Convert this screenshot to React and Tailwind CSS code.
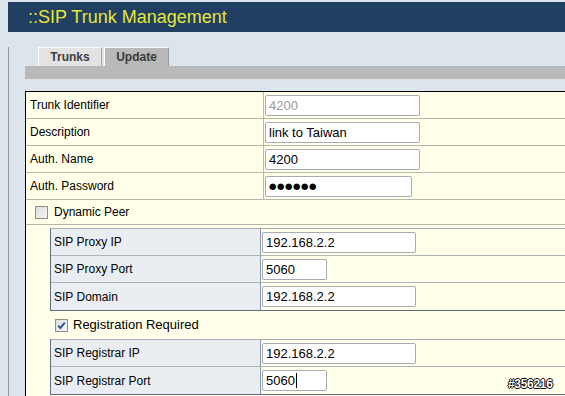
import React from "react";

// Fake text box, looks like an old XP style input
const Field = ({ value, width, muted, password, cursor }) => (
  <div
    className={`flex h-[21px] items-center rounded-[2px] border border-[#a5acb5] bg-white pl-[3px] text-[13px] leading-none ${
      muted ? "text-[#9a9a9a]" : "text-black"
    }`}
    style={{ width }}
  >
    {password ? (
      <span className="font-['DejaVu_Sans',sans-serif] text-[8.5px] tracking-[0.6px]">●●●●●●</span>
    ) : (
      <span>{value}</span>
    )}
    {cursor && <span className="ml-[1px] h-[15px] w-px bg-black" />}
  </div>
);

const CheckBox = ({ checked }) => (
  <div className="flex h-[13px] w-[13px] items-center justify-center border border-[#8e8f8f] bg-gradient-to-br from-[#dcdcdc] to-[#f6f6f6]">
    {checked && (
      <svg width="9" height="9" viewBox="0 0 9 9">
        <path d="M1.2 4.6 L3.4 7 L7.8 1.6" fill="none" stroke="#2a4d9a" strokeWidth="1.8" />
      </svg>
    )}
  </div>
);

const mainRows = [
  { label: "Trunk Identifier", value: "4200", width: 155, muted: true },
  { label: "Description", value: "link to Taiwan", width: 155 },
  { label: "Auth. Name", value: "4200", width: 155 },
  { label: "Auth. Password", value: "", width: 147, password: true },
];

const proxyRows = [
  { label: "SIP Proxy IP", value: "192.168.2.2", width: 154 },
  { label: "SIP Proxy Port", value: "5060", width: 65 },
  { label: "SIP Domain", value: "192.168.2.2", width: 154 },
];

const registrarRows = [
  { label: "SIP Registrar IP", value: "192.168.2.2", width: 154 },
  { label: "SIP Registrar Port", value: "5060", width: 65, cursor: true },
];

const SubTable = ({ rows }) => (
  <div className="w-[560px] border-t border-b border-l border-t-[#a4acb4] border-b-[#5d6d7d] border-l-[#5d6d7d]">
    {rows.map((row, i) => (
      <div
        key={row.label}
        className={`flex h-[27px] items-stretch ${i < rows.length - 1 ? "border-b border-[#aab2ba]" : ""}`}
      >
        <div className="flex w-[210px] shrink-0 items-center border-r border-[#8e9aa6] bg-[#eaeef2] pl-[3px] text-[12px]">
          {row.label}
        </div>
        <div className="flex items-center pl-[1px]">
          <Field value={row.value} width={row.width} cursor={row.cursor} />
        </div>
      </div>
    ))}
  </div>
);

export default function App() {
  return (
    <div className="relative h-[396px] w-[565px] overflow-hidden bg-[#dce4ec] pt-[2px] font-['Liberation_Sans',Arial,sans-serif] text-black">
      {/* Header */}
      <div className="ml-[8px] flex h-[30px] items-center bg-[#213f62] pl-[20px]">
        <span className="text-[18px] leading-none text-[#e6e63a]">::SIP Trunk Management</span>
      </div>

      <div className="ml-[8px] h-[364px] border-l border-[#8d9aa7] pl-[16px]">
        {/* Tabs */}
        <div className="mt-[15px] flex h-[19px] items-end gap-[2px] pl-[13px]">
          <div className="flex h-[19px] w-[64px] items-center justify-center border-t border-l border-r border-t-white border-l-white border-r-[#a0a0a0] bg-[#e3e3e3] text-[12px] font-bold text-[#3c3c3c]">
            Trunks
          </div>
          <div className="flex h-[19px] w-[65px] items-center justify-center border-t border-l border-r border-t-white border-l-white border-r-[#9a9a9a] bg-[#b9b9b9] text-[12px] font-bold text-[#3c3c3c]">
            Update
          </div>
        </div>
        <div className="h-[13px] bg-[#b9b9b9]" />

        {/* Form table */}
        <div className="mt-[12px] w-[560px] border-t border-l border-black bg-[#ffffea]">
          {mainRows.map((row) => (
            <div key={row.label} className="flex h-[27px] items-stretch border-b border-[#b6b6aa]">
              <div className="flex w-[238px] shrink-0 items-center border-r border-[#b6b6aa] pl-[4px] text-[12px]">
                {row.label}
              </div>
              <div className="flex items-center pl-[1px]">
                <Field value={row.value} width={row.width} muted={row.muted} password={row.password} />
              </div>
            </div>
          ))}

          <div className="flex h-[25px] items-center gap-[6px] border-b border-[#b6b6aa] pl-[9px] text-[12px]">
            <CheckBox />
            <span>Dynamic Peer</span>
          </div>

          <div className="pl-[24px] pt-[3px] pb-[6px]">
            <SubTable rows={proxyRows} />
            <div className="flex h-[28px] items-center gap-[5px] pl-[5px] text-[13px]">
              <CheckBox checked />
              <span>Registration Required</span>
            </div>
            <SubTable rows={registrarRows} />
          </div>
        </div>
      </div>

      {/* image watermark */}
      <div className="absolute left-[508px] top-[378px] text-[12px] font-bold leading-none tracking-[-0.3px] text-white [text-shadow:-1px_0_#000,1px_0_#000,0_1px_#000,0_-1px_#000]">
        #356216
      </div>
    </div>
  );
}
